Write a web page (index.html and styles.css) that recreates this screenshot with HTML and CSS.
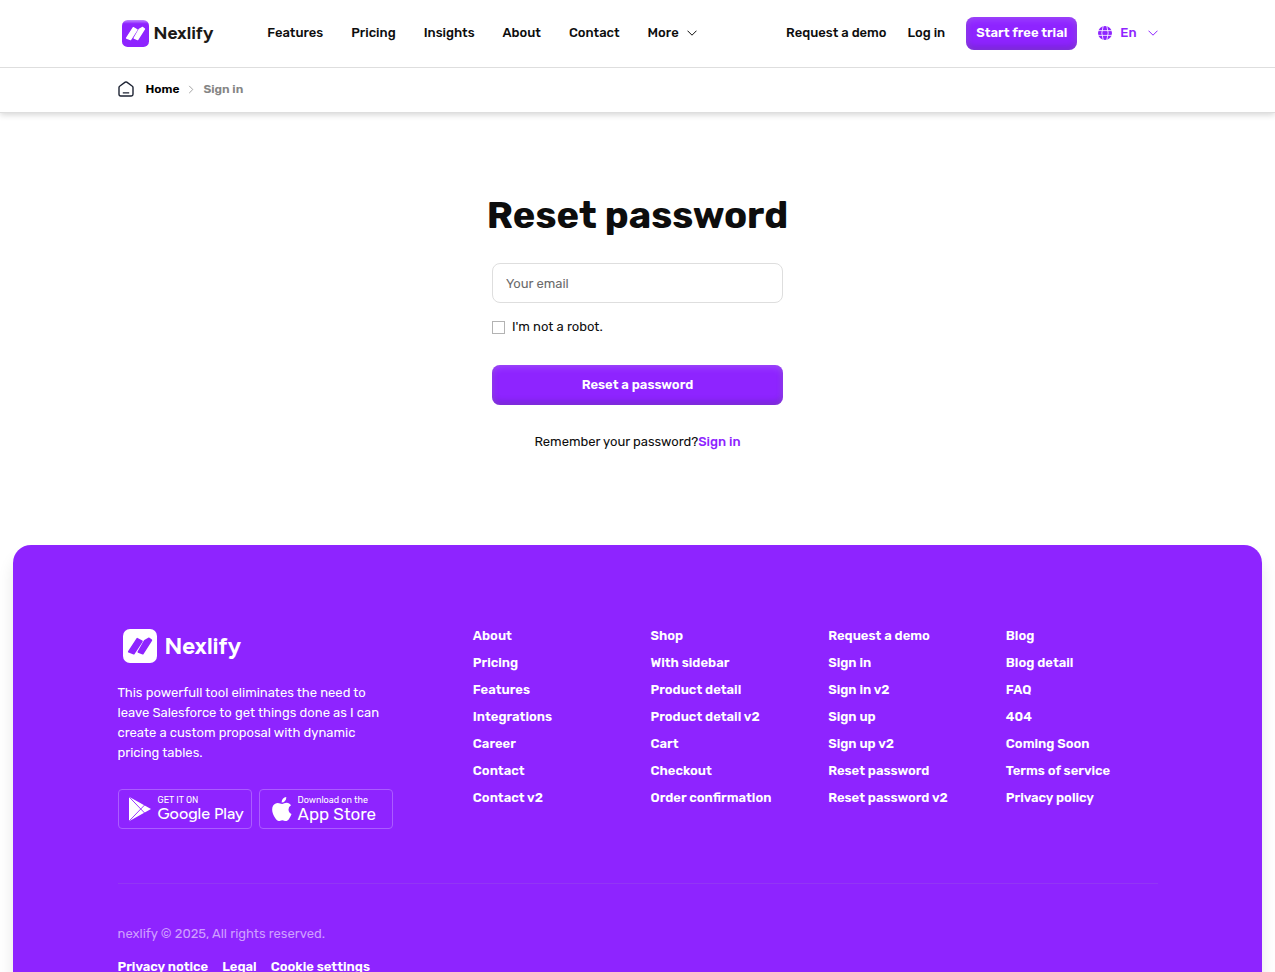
FILE: index.html
```html
<!DOCTYPE html>
<html lang="en">
<head>
<meta charset="utf-8">
<meta name="viewport" content="width=device-width, initial-scale=1">
<title>Reset password - Nexlify</title>
<link rel="stylesheet" href="styles.css">
</head>
<body>
<header class="header">
  <div class="topbar">
    <div class="container topbar-inner">
      <a class="logo" href="#">
        <svg class="logo-mark" viewBox="0 0 34 34" aria-hidden="true">
          <defs><linearGradient id="markFill" x1="0" y1="0" x2="0" y2="1"><stop offset="0" stop-color="#c08cff"/><stop offset=".14" stop-color="#8e24ff"/></linearGradient></defs>
          <rect width="34" height="34" rx="7" fill="url(#markFill)"/>
          <path d="M5.700 22.800 14.200 9.600 19 12.200 10.800 24.800zM15.300 22.900 21.700 11.600 26 9.300 28.400 11.200 19.800 24.800z" fill="#fff" stroke="#fff" stroke-width="1.600" stroke-linejoin="round"/>
        </svg>
        <span>Nexlify</span>
      </a>
      <nav class="nav" aria-label="Main">
        <a href="#">Features</a>
        <a href="#">Pricing</a>
        <a href="#">Insights</a>
        <a href="#">About</a>
        <a href="#">Contact</a>
        <button class="menu-button" type="button">More
          <svg class="chevron" viewBox="0 0 10 6" aria-hidden="true"><path d="M.5.700l4.500 4.500L9.500.700"/></svg>
        </button>
      </nav>
      <div class="actions">
        <a href="#">Request a demo</a>
        <a href="#">Log in</a>
        <a class="button button-small" href="#">Start free trial</a>
        <button class="menu-button language" type="button">
          <svg class="globe" viewBox="0 0 14 14" aria-hidden="true">
            <circle cx="7" cy="7" r="7" fill="#8e24ff"/>
            <path d="M0 4.600h14M0 9.400h14M5.200 0Q2.400 7 5.200 14M8.800 0q2.800 7 0 14" fill="none" stroke="#fff" stroke-width=".8"/>
          </svg>
          En
          <svg class="chevron" viewBox="0 0 10 6" aria-hidden="true"><path d="M.5.700l4.500 4.500L9.500.700"/></svg>
        </button>
      </div>
    </div>
  </div>
  <nav class="container breadcrumb" aria-label="Breadcrumb">
    <svg class="home-icon" viewBox="0 0 16 16" aria-hidden="true"><path d="M1 6.500q0-.8.6-1.200L7.200 1.200q.8-.5 1.600 0l5.600 4.100q.6.400.6 1.200v6.800Q15 15 13.300 15H2.700Q1 15 1 13.300zM4.800 11.900h6.400"/></svg>
    <a href="#">Home</a>
    <svg class="crumb-arrow" viewBox="0 0 6 10" aria-hidden="true"><path d="M1 1l4 4-4 4"/></svg>
    <span>Sign in</span>
  </nav>
</header>

<main class="main">
  <form class="form">
    <h1>Reset password</h1>
    <input class="field" type="email" placeholder="Your email" aria-label="Your email">
    <label class="check"><input type="checkbox"><span>I'm not a robot.</span></label>
    <button class="button button-wide" type="submit">Reset a password</button>
    <p class="hint">Remember your password?<a href="#">Sign in</a></p>
  </form>
</main>

<footer class="footer">
  <div class="container">
    <div class="footer-grid">
      <div class="brand">
        <a class="logo logo-light" href="#">
          <svg class="logo-mark" viewBox="0 0 34 34" aria-hidden="true">
            <rect width="34" height="34" rx="7" fill="#fff"/>
            <path d="M5.700 22.800 14.200 9.600 19 12.200 10.800 24.800zM15.300 22.900 21.700 11.600 26 9.300 28.400 11.200 19.800 24.800z" fill="#8e24ff" stroke="#8e24ff" stroke-width="1.600" stroke-linejoin="round"/>
          </svg>
          <span>Nexlify</span>
        </a>
        <p class="about">This powerfull tool eliminates the need to leave Salesforce to get things done as I can create a custom proposal with dynamic pricing tables.</p>
        <div class="stores">
          <a class="store store-google" href="#">
            <svg class="play-icon" viewBox="0 0 24 26" aria-hidden="true">
              <path d="M1 .8 23 13 1 25.200z" fill="#fff"/>
              <path d="M1 .8l15.800 16.400M1 25.200 16.800 8.800" stroke="#8e24ff" stroke-width=".9" fill="none"/>
            </svg>
            <span class="store-text"><small>GET IT ON</small><strong>Google Play</strong></span>
          </a>
          <a class="store store-apple" href="#">
            <svg class="apple-icon" viewBox="0 0 20 24" aria-hidden="true">
              <path d="M14.200 0q.3 2.300-1.200 4-1.400 1.600-3.300 1.500-.2-2 1.200-3.700Q12.300.2 14.200 0zM19 8.200q-2.600 1.600-2.500 4.400.1 3.200 3 4.400-.8 2.500-2.500 4.900C15.900 23.400 15 24 13.800 24c-1.300 0-1.800-.8-3.500-.8S8 24 6.800 24c-1.300 0-2.300-1-3.300-2.500C.3 17-.9 11.800 1.200 8.600 2.300 6.800 4 5.900 5.800 5.900c1.700 0 2.900 1 4.300 1s2.600-1.100 4.700-1.100c1.600 0 3.200.9 4.200 2.400z" fill="#fff"/>
            </svg>
            <span class="store-text"><small>Download on the</small><strong>App Store</strong></span>
          </a>
        </div>
      </div>
      <ul class="links">
        <li><a href="#">About</a></li><li><a href="#">Pricing</a></li><li><a href="#">Features</a></li><li><a href="#">Integrations</a></li><li><a href="#">Career</a></li><li><a href="#">Contact</a></li><li><a href="#">Contact v2</a></li>
      </ul>
      <ul class="links">
        <li><a href="#">Shop</a></li><li><a href="#">With sidebar</a></li><li><a href="#">Product detail</a></li><li><a href="#">Product detail v2</a></li><li><a href="#">Cart</a></li><li><a href="#">Checkout</a></li><li><a href="#">Order confirmation</a></li>
      </ul>
      <ul class="links">
        <li><a href="#">Request a demo</a></li><li><a href="#">Sign in</a></li><li><a href="#">Sign in v2</a></li><li><a href="#">Sign up</a></li><li><a href="#">Sign up v2</a></li><li><a href="#">Reset password</a></li><li><a href="#">Reset password v2</a></li>
      </ul>
      <ul class="links">
        <li><a href="#">Blog</a></li><li><a href="#">Blog detail</a></li><li><a href="#">FAQ</a></li><li><a href="#">404</a></li><li><a href="#">Coming Soon</a></li><li><a href="#">Terms of service</a></li><li><a href="#">Privacy policy</a></li>
      </ul>
    </div>
    <div class="legal">
      <p>nexlify © 2025, All rights reserved.</p>
      <nav class="legal-links" aria-label="Legal">
        <a href="#">Privacy notice</a>
        <a href="#">Legal</a>
        <a href="#">Cookie settings</a>
      </nav>
    </div>
  </div>
</footer>
</body>
</html>
```
FILE: styles.css
```css
* { box-sizing: border-box; }

body {
  margin: 0;
  background: #fff;
  color: #0d0d0d;
  font-family: Rubik, Roboto, sans-serif;
  font-size: 13px;
  line-height: 20px;
}

a { color: inherit; text-decoration: none; }
p, h1, ul { margin: 0; padding: 0; }
ul { list-style: none; }
button, input { font: inherit; color: inherit; }
svg { flex: none; }

.container { width: 100%; max-width: 1040px; margin: 0 auto; }

.header { border-bottom: 1px solid #dedede; box-shadow: 0 2px 6px rgba(0, 0, 0, .16); }
.topbar { border-bottom: 1px solid #dedede; font-weight: 500; }
.topbar-inner { display: flex; align-items: center; height: 67px; padding-bottom: 1px; }

.logo {
  display: inline-flex;
  align-items: center;
  gap: 5px;
  margin-left: 4px;
  color: #1c1917;
  font-family: Figtree, "Noto Sans", sans-serif;
  font-size: 18px;
  font-weight: 700;
}
.logo-mark { width: 27px; height: 27px; }

.nav { display: flex; align-items: center; gap: 28px; margin-left: 54px; }
.menu-button {
  display: inline-flex;
  align-items: center;
  gap: 8px;
  padding: 0;
  border: 0;
  background: none;
}
.chevron { width: 10px; height: 6px; fill: none; stroke: currentColor; stroke-width: 1; }

.actions { display: flex; align-items: center; gap: 21px; margin-left: auto; }
.language { color: #8e24ff; }
.language .chevron { margin-left: 3px; }
.globe { width: 14px; height: 14px; }

.button {
  border: 0;
  border-radius: 8px;
  background: #8e24ff;
  box-shadow: inset 0 2px 7px rgba(255, 255, 255, .2), inset 0 -3px 6px rgba(50, 30, 90, .3);
  color: #fff;
  font-weight: 600;
  text-align: center;
}
.button-small { padding: 6px 10px 7px; }
.button-wide { width: 100%; height: 40px; margin-top: 28px; }

.breadcrumb { display: flex; align-items: center; height: 44px; padding-bottom: 2px; font-size: 12px; font-weight: 600; color: #000; }
.breadcrumb span { color: #858585; }
.home-icon { width: 16px; height: 16px; margin-right: 12px; fill: none; stroke: #1d2333; stroke-width: 1.4; }
.crumb-arrow { width: 6px; height: 9px; margin: 0 9px; fill: none; stroke: #999; }

.main { display: flex; justify-content: center; padding: 76px 16px 93px; }
.form { width: 291px; }
.form h1 {
  display: flex;
  justify-content: center;
  font-size: 38px;
  line-height: 52px;
  font-weight: 700;
  white-space: nowrap;
}
.field {
  display: block;
  width: 100%;
  height: 40px;
  margin-top: 22px;
  padding: 0 13px;
  border: 1px solid #dedede;
  border-radius: 8px;
  background: #fff;
}
.field::placeholder { color: #6b6b6b; opacity: 1; }
.check { display: flex; align-items: center; gap: 7px; margin-top: 14px; }
.check input {
  appearance: none;
  width: 13px;
  height: 13px;
  margin: 0;
  border: 1px solid #b3b3b3;
  background: #fff;
}
.check input:checked { background: #8e24ff; }
.hint { margin-top: 27px; text-align: center; }
.hint a { color: #8e24ff; font-weight: 500; }

.footer {
  margin: 0 13px;
  padding: 81px 0 60px;
  border-radius: 18px 18px 0 0;
  background: #8e24ff;
  box-shadow: 0 12px 16px rgba(0, 0, 0, .1);
  color: #fff;
}
.footer-grid { display: grid; grid-template-columns: repeat(6, 1fr); gap: 26px; }
.brand { grid-column: span 2; }
.logo-light { gap: 8px; margin: 3px 0 0 5px; color: #fff; font-size: 23px; }
.logo-light .logo-mark { width: 34px; height: 34px; }
.about { max-width: 276px; margin-top: 14px; }
.stores { display: flex; gap: 7px; margin-top: 26px; }
.store {
  display: flex;
  align-items: center;
  gap: 6px;
  width: 134px;
  height: 40px;
  padding-left: 9px;
  border: 1px solid #ab5cff;
  border-radius: 4px;
}
.store-apple { padding-left: 12px; }
.store-text { display: flex; flex-direction: column; white-space: nowrap; }
.store small { font-size: 9px; line-height: 10px; }
.store strong { font-size: 17px; line-height: 18px; font-weight: 400; }
.store-google strong { font-family: Figtree, "Noto Sans", sans-serif; font-size: 16px; font-weight: 500; }
.play-icon { width: 24px; height: 26px; }
.apple-icon { width: 20px; height: 24px; }

.links { display: grid; align-content: start; gap: 7px; font-weight: 600; white-space: nowrap; }
.legal { margin-top: 54px; padding-top: 40px; border-top: 1px solid #9236f5; }
.legal p { color: #cf9fff; }
.legal-links { display: flex; gap: 14px; margin-top: 13px; font-weight: 600; }
```
